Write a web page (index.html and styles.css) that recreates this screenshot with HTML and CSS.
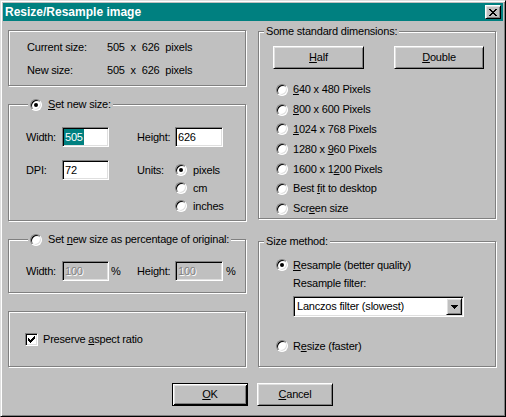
FILE: index.html
```html
<!DOCTYPE html>
<html>
<head>
<meta charset="utf-8">
<title>Resize/Resample image</title>
<link rel="stylesheet" href="styles.css">
</head>
<body>
<div class="window">
  <div class="titlebar">
    <span class="title">Resize/Resample image</span>
    <span class="btn close"><svg width="8" height="7" viewBox="0 0 8 7" shape-rendering="crispEdges"><path fill="#000" d="M0 0h2v1H0z M6 0h2v1H6z M1 1h2v1H1z M5 1h2v1H5z M2 2h4v1H2z M3 3h2v1H3z M2 4h4v1H2z M1 5h2v1H1z M5 5h2v1H5z M0 6h2v1H0z M6 6h2v1H6z"/></svg></span>
  </div>
  <div class="body">
    <div class="col">
      <div class="group g-info">
        <span>Current size:</span><span class="val">505 x 626 pixels</span>
        <span>New size:</span><span class="val">505 x 626 pixels</span>
      </div>

      <div class="group g-new">
        <div class="legend"><span class="radio on"></span><span><u>S</u>et new size:</span></div>
        <div class="form">
          <span class="lbl">Width:</span>
          <span class="edit w47"><span class="sel">505</span></span>
          <span></span>
          <span class="lbl">Height:</span>
          <span class="edit w48">626</span>

          <span class="lbl">DPI:</span>
          <span class="edit w47">72</span>
          <span></span>
          <span class="lbl">Units:</span>
          <div class="units">
            <div class="opt u"><span class="radio on"></span><span>pixels</span></div>
            <div class="opt u"><span class="radio"></span><span>cm</span></div>
            <div class="opt u"><span class="radio"></span><span>inches</span></div>
          </div>
        </div>
      </div>

      <div class="group g-pct">
        <div class="legend"><span class="radio"></span><span>Set <u>n</u>ew size as percentage of original:</span></div>
        <div class="form one">
          <span class="lbl">Width:</span>
          <span class="edit w47 off">100</span>
          <span class="lbl pct">%</span>
          <span class="lbl">Height:</span>
          <span class="edit w48 off">100</span>
          <span class="lbl pct2">%</span>
        </div>
      </div>

      <div class="group g-keep">
        <div class="check-row">
          <span class="check"><svg width="7" height="7" viewBox="0 0 7 7" shape-rendering="crispEdges"><path fill="#000" d="M0 2h1v3H0z M1 3h1v3H1z M2 4h1v3H2z M3 3h1v3H3z M4 2h1v3H4z M5 1h1v3H5z M6 0h1v3H6z"/></svg></span>
          <span>Preserve <u>a</u>spect ratio</span>
        </div>
      </div>
    </div>

    <div class="col">
      <div class="group g-std">
        <div class="legend r"><span>Some standard dimensions:</span></div>
        <div class="std-btns">
          <span class="btn half"><span><u>H</u>alf</span></span>
          <span class="btn double"><span><u>D</u>ouble</span></span>
        </div>
        <div class="std-list">
          <div class="opt s"><span class="radio"></span><span><u>6</u>40 x 480 Pixels</span></div>
          <div class="opt s"><span class="radio"></span><span><u>8</u>00 x 600 Pixels</span></div>
          <div class="opt s"><span class="radio"></span><span><u>1</u>024 x 768 Pixels</span></div>
          <div class="opt s"><span class="radio"></span><span>1280 x <u>9</u>60 Pixels</span></div>
          <div class="opt s"><span class="radio"></span><span>1600 x 1<u>2</u>00 Pixels</span></div>
          <div class="opt s"><span class="radio"></span><span>Best <u>f</u>it to desktop</span></div>
          <div class="opt s"><span class="radio"></span><span>Scr<u>e</u>en size</span></div>
        </div>
      </div>

      <div class="group g-method">
        <div class="legend r"><span>Size method:</span></div>
        <div class="opt m"><span class="radio on"></span><span><u>R</u>esample (better quality)</span></div>
        <div class="sub">
          <div class="filter-lbl">Resample filter:</div>
          <div class="select">
            <span>Lanczos filter (slowest)</span>
            <span class="btn arrow"><svg width="7" height="4" viewBox="0 0 7 4" shape-rendering="crispEdges"><path fill="#000" d="M0 0h7v1H0z M1 1h5v1H1z M2 2h3v1H2z M3 3h1v1H3z"/></svg></span>
          </div>
        </div>
        <div class="opt m last"><span class="radio"></span><span>R<u>e</u>size (faster)</span></div>
      </div>
    </div>

    <div class="actions">
      <span class="btn default"><span><u>O</u>K</span></span>
      <span class="btn"><span><u>C</u>ancel</span></span>
    </div>
  </div>
</div>
</body>
</html>
```

FILE: styles.css
```css
* { box-sizing: border-box; }
html, body { margin: 0; padding: 0; }
body {
  width: 506px;
  height: 417px;
  overflow: hidden;
  background: #c0c0c0;
  font-family: "Liberation Sans", Arial, sans-serif;
  font-size: 11px;
  line-height: 13px;
  letter-spacing: -0.2px;
  color: #000;
}
u { text-decoration: underline; text-underline-offset: 1px; }

.window {
  width: 506px;
  height: 417px;
  padding: 2px;
  background: #c0c0c0;
  border: 1px solid;
  border-color: #dfdfdf #000 #000 #dfdfdf;
  box-shadow: inset 1px 1px 0 #fff, inset -1px -1px 0 #808080;
}

.titlebar {
  height: 18px;
  background: #008080;
  color: #fff;
  display: flex;
  align-items: center;
  justify-content: space-between;
  padding: 0 2px;
  font-weight: bold;
  font-size: 12px;
  letter-spacing: 0;
}

.btn {
  background: #c0c0c0;
  border: 1px solid;
  border-color: #fff #000 #000 #fff;
  box-shadow: inset 1px 1px 0 #dfdfdf, inset -1px -1px 0 #808080;
  display: flex;
  align-items: center;
  justify-content: center;
  color: #000;
  font-weight: normal;
  font-size: 11px;
}
.btn svg { display: block; }
.close { width: 16px; height: 14px; }

.body {
  display: grid;
  grid-template-columns: 238px 238px;
  column-gap: 12px;
  padding-left: 5px;
}
.col { display: flex; flex-direction: column; }

.group {
  position: relative;
  border: 1px solid #808080;
  box-shadow: inset 1px 1px 0 #fff, 1px 1px 0 #fff;
}
.legend {
  position: absolute;
  top: -7px;
  left: 19px;
  height: 13px;
  padding: 0 2px;
  background: #c0c0c0;
  display: flex;
  align-items: center;
  gap: 6px;
  white-space: nowrap;
}
.legend.r { left: 5px; }

.radio {
  position: relative;
  flex: none;
  width: 12px;
  height: 12px;
  border-radius: 50%;
  background: #fff;
  border: 1px solid;
  border-color: #808080 #fff #fff #808080;
  box-shadow: inset 1px 1px 0 #000, inset -1px -1px 0 #dfdfdf;
}
.radio.on::after {
  content: "";
  position: absolute;
  left: 3px;
  top: 3px;
  width: 4px;
  height: 4px;
  border-radius: 50%;
  background: #000;
}

.opt { display: flex; align-items: center; gap: 5px; white-space: nowrap; }

/* group 1 */
.g-info {
  margin-top: 9px;
  height: 56px;
  display: grid;
  grid-template-columns: 80px auto;
  align-content: start;
  row-gap: 10px;
  padding: 10px 0 0 18px;
}
.val { word-spacing: 3px; }

/* group 2 */
.g-new {
  margin-top: 18px;
  height: 117px;
  padding: 22px 0 0 17px;
}
.form {
  display: grid;
  grid-template-columns: 36px 47px 28px 38px auto;
  grid-template-rows: 20px auto;
  row-gap: 13px;
  align-items: start;
}
.lbl { margin-top: 4px; white-space: nowrap; }

.edit {
  height: 20px;
  background: #fff;
  border: 1px solid;
  border-color: #808080 #fff #fff #808080;
  box-shadow: inset 1px 1px 0 #000, inset -1px -1px 0 #dfdfdf;
  display: flex;
  align-items: center;
  padding-left: 2px;
}
.w47 { width: 47px; }
.w48 { width: 48px; }
.sel {
  background: #008080;
  color: #fff;
  line-height: 16px;
  padding: 0 1px;
  margin-left: -1px;
}
.edit.off {
  background: #c0c0c0;
  color: #808080;
  text-shadow: 1px 1px 0 #fff;
}

.units { margin-top: 1px; display: flex; flex-direction: column; }
.opt.u { height: 18px; gap: 6px; }

/* group 3 */
.g-pct {
  margin-top: 18px;
  height: 54px;
  padding: 21px 0 0 17px;
}
.form.one { grid-template-columns: 36px 47px 28px 38px 48px auto; grid-template-rows: 20px; }
.pct { padding-left: 2px; }
.pct2 { padding-left: 3px; }

/* group 4 */
.g-keep {
  margin-top: 18px;
  height: 56px;
  padding: 21px 0 0 16px;
}
.check-row { display: flex; align-items: center; gap: 5px; }
.check {
  width: 13px;
  height: 13px;
  background: #fff;
  border: 1px solid;
  border-color: #808080 #fff #fff #808080;
  box-shadow: inset 1px 1px 0 #000, inset -1px -1px 0 #dfdfdf;
  display: flex;
  align-items: center;
  justify-content: center;
}
.check svg { display: block; }

/* right group 1 */
.g-std {
  margin-top: 10px;
  height: 188px;
  padding: 14px 0 0 14px;
}
.std-btns { display: flex; gap: 30px; }
.std-btns .btn { height: 23px; }
.half { width: 91px; }
.double { width: 90px; }
.std-list { margin-top: 11px; padding-left: 3px; }
.opt.s { height: 19.8px; }

/* right group 2 */
.g-method {
  margin-top: 22px;
  height: 126px;
  padding: 14px 0 0 17px;
}
.opt.m { height: 18px; }
.sub { padding-left: 17px; }
.filter-lbl { margin-top: 3px; }
.select {
  margin-top: 6px;
  width: 171px;
  height: 21px;
  background: #fff;
  border: 1px solid;
  border-color: #808080 #fff #fff #808080;
  box-shadow: inset 1px 1px 0 #000, inset -1px -1px 0 #dfdfdf;
  display: flex;
  align-items: center;
  justify-content: space-between;
  padding: 0 1px 0 3px;
}
.arrow { width: 16px; height: 17px; }
.opt.m.last { margin-top: 20px; }

/* bottom buttons */
.actions {
  grid-column: 1 / -1;
  display: flex;
  justify-content: center;
  gap: 9px;
  margin-top: 16px;
  padding-left: 1px;
}
.actions .btn { width: 76px; height: 23px; }
.btn.default {
  border-color: #000;
  box-shadow: inset 1px 1px 0 #fff, inset -1px -1px 0 #000, inset 2px 2px 0 #dfdfdf, inset -2px -2px 0 #808080;
}
```
